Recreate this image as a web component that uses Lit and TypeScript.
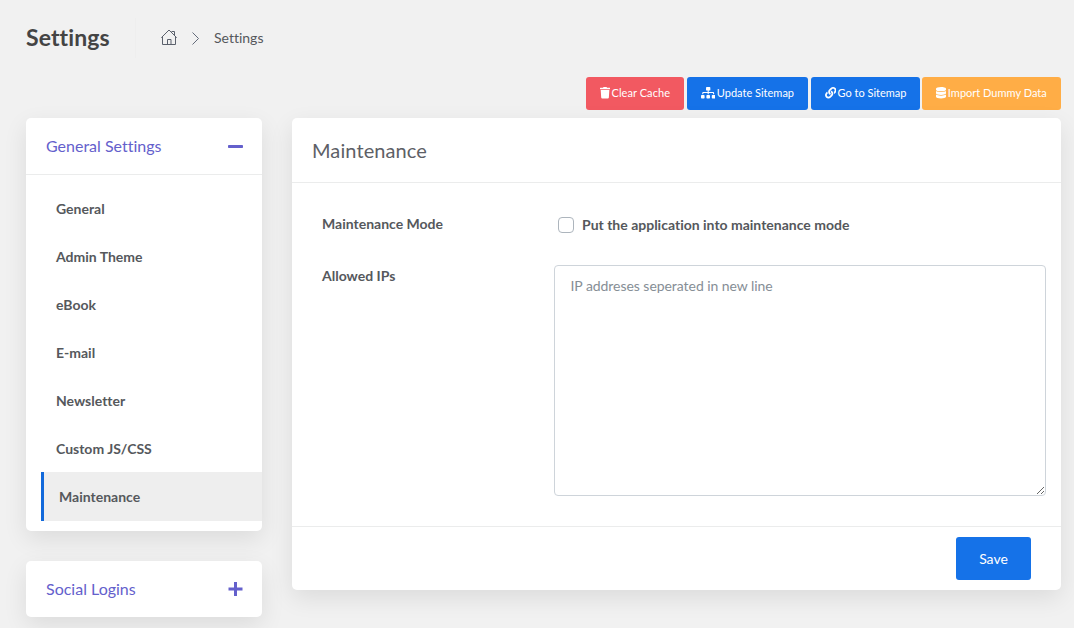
import { LitElement, html, css, svg } from "lit";
import { customElement, state } from "lit/decorators.js";

const ICONS = {
  trash: { w: 448, d: "M432 32H312l-9.4-18.7A24 24 0 0 0 281.1 0H166.8a23.72 23.72 0 0 0-21.4 13.3L136 32H16A16 16 0 0 0 0 48v32a16 16 0 0 0 16 16h416a16 16 0 0 0 16-16V48a16 16 0 0 0-16-16zM53.2 467a48 48 0 0 0 47.9 45h245.8a48 48 0 0 0 47.9-45L416 128H32z" },
  sitemap: { w: 640, d: "M128 352H32c-17.67 0-32 14.33-32 32v96c0 17.67 14.33 32 32 32h96c17.67 0 32-14.33 32-32v-96c0-17.67-14.33-32-32-32zm-24-80h192v48h48v-48h192v48h48v-57.59c0-21.17-17.23-38.41-38.41-38.41H344v-64h40c17.67 0 32-14.33 32-32V32c0-17.67-14.33-32-32-32H256c-17.67 0-32 14.33-32 32v96c0 17.67 14.33 32 32 32h40v64H94.41C73.23 224 56 241.23 56 262.41V320h48v-48zm264 80h-96c-17.67 0-32 14.33-32 32v96c0 17.67 14.33 32 32 32h96c17.67 0 32-14.33 32-32v-96c0-17.67-14.33-32-32-32zm240 0h-96c-17.67 0-32 14.33-32 32v96c0 17.67 14.33 32 32 32h96c17.67 0 32-14.33 32-32v-96c0-17.67-14.33-32-32-32z" },
  link: { w: 512, d: "M326.612 185.391c59.747 59.809 58.927 155.698.36 214.59-.11.12-.24.25-.36.37l-67.2 67.2c-59.27 59.27-155.699 59.262-214.96 0-59.27-59.26-59.27-155.7 0-214.96l37.106-37.106c9.84-9.84 26.786-3.3 27.294 10.606.648 17.722 3.826 35.527 9.69 52.721 1.986 5.822.567 12.262-3.783 16.612l-13.087 13.087c-28.026 28.026-28.905 73.66-1.155 101.96 28.024 28.579 74.086 28.749 102.325.51l67.2-67.19c28.191-28.191 28.073-73.757 0-101.83-3.701-3.694-7.429-6.564-10.341-8.569a16.037 16.037 0 0 1-6.947-12.606c-.396-10.567 3.348-21.456 11.698-29.806l21.054-21.055c5.521-5.521 14.182-6.199 20.584-1.731a152.482 152.482 0 0 1 20.522 17.197zM467.547 44.449c-59.261-59.262-155.69-59.27-214.96 0l-67.2 67.2c-.12.12-.25.25-.36.37-58.566 58.892-59.387 154.781.36 214.59a152.454 152.454 0 0 0 20.521 17.196c6.402 4.468 15.064 3.789 20.584-1.731l21.054-21.055c8.35-8.35 12.094-19.239 11.698-29.806a16.037 16.037 0 0 0-6.947-12.606c-2.912-2.005-6.64-4.875-10.341-8.569-28.073-28.073-28.191-73.639 0-101.83l67.2-67.19c28.239-28.239 74.3-28.069 102.325.51 27.75 28.3 26.872 73.934-1.155 101.96l-13.087 13.087c-4.35 4.35-5.769 10.79-3.783 16.612 5.864 17.194 9.042 34.999 9.69 52.721.509 13.906 17.454 20.446 27.294 10.606l37.106-37.106c59.271-59.259 59.271-155.699.001-214.959z" },
  database: { w: 448, d: "M448 73.143v45.714C448 159.143 347.667 192 224 192S0 159.143 0 118.857V73.143C0 32.857 100.333 0 224 0s224 32.857 224 73.143zM448 176v102.857C448 319.143 347.667 352 224 352S0 319.143 0 278.857V176c48.125 33.143 136.208 48.572 224 48.572S399.874 209.143 448 176zm0 160v102.857C448 479.143 347.667 512 224 512S0 479.143 0 438.857V336c48.125 33.143 136.208 48.572 224 48.572S399.874 369.143 448 336z" },
};

const glyph = (name: keyof typeof ICONS) => {
  const { w, d } = ICONS[name];
  return html`<svg width=${(w / 512) * 11.5} height="11.5" viewBox="0 0 ${w} 512" fill="currentColor" aria-hidden="true">${svg`<path d=${d}></path>`}</svg>`;
};

@customElement("app-root")
export class AppRoot extends LitElement {
  @state() private active = "Maintenance";

  private sections = ["General", "Admin Theme", "eBook", "E-mail", "Newsletter", "Custom JS/CSS", "Maintenance"];

  static styles = css`
    :host {
      display: block;
      box-sizing: border-box;
      height: 628px;
      overflow: hidden;
      padding: 0 13px 0 26px;
      background: #f1f1f1;
      color: #575962;
      color: #55585c;
      font: 400 14px/21px Lato, sans-serif;
      font-variant-ligatures: none;
    }
    * { box-sizing: border-box; }
    svg { display: block; flex: none; }
    .head { display: flex; align-items: center; height: 77px; padding-bottom: 2px; }
    h1 { margin: 0; width: 109px; padding-bottom: 1px; font-size: 23px; font-weight: 700; line-height: 30px; color: #444; white-space: nowrap; letter-spacing: 0.1px; }
    .crumbs { display: flex; align-items: center; height: 40px; padding-left: 25px; border-left: 1px solid #eee; }
    .chev { margin: 1px 14px 0 14px; }
    .actions { display: flex; justify-content: flex-end; height: 33px; }
    .btn {
      display: flex; align-items: center; justify-content: center;
      border: 0; border-radius: 3px; padding: 0 0 1px; color: #fff; background: #1572e8;
      font: 400 11px/18px Lato, sans-serif; font-variant-ligatures: none; gap: 1.5px; white-space: nowrap;
    }
    .clear { width: 98px; background: #f25961; margin-right: 3px; letter-spacing: 0.06px; }
    .update { width: 121px; margin-right: 3px; }
    .goto { width: 109px; margin-right: 2px; }
    .import { width: 139px; background: #ffad46; }
    .main { display: grid; grid-template-columns: 236px 769px; column-gap: 30px; margin-top: 8px; align-items: start; }
    .side { display: flex; flex-direction: column; gap: 30px; }
    .card { background: #fff; border-radius: 5px; box-shadow: 0 8px 24px rgba(0, 0, 0, 0.09); }
    .toggle { display: flex; align-items: center; justify-content: space-between; height: 56px; padding: 0 19px 0 20px; font-size: 16px; color: #6460cc; }
    .toggle span { padding-bottom: 2px; }
    .list { margin: 0; padding: 9px 0 10px 15px; border-top: 1px solid #ebecec; list-style: none; }
    .item { height: 48px; padding-left: 15px; line-height: 50px; font-weight: 700; cursor: pointer; }
    .item.active { height: 49px; background: #eee; border-left: 3px solid #1269db; }
    .title { height: 65px; padding: 0 20px; border-bottom: 1px solid #ebecec; font-size: 20px; line-height: 65px; font-weight: 400; margin: 0; letter-spacing: 0.1px; color: #5d6066; }
    .form { height: 343px; padding: 30px 15px 0 30px; }
    .row { display: grid; grid-template-columns: 232px 492px; }
    .mode { height: 52px; }
    .label { font-weight: 700; line-height: 22px; }
    .check { display: flex; align-items: center; gap: 8px; height: 24px; padding-left: 4px; font-weight: 700; }
    .check span { padding-bottom: 1px; }
    .box { appearance: none; width: 16px; height: 16px; margin: 0; border: 1px solid #adb5bd; border-radius: 4px; background: #fff; }
    .ips {
      display: block; width: 492px; height: 231px; margin: 0; padding: 9px 15.5px; resize: both;
      border: 1px solid #ced4da; border-radius: 4px; font: 400 14px/21px Lato, sans-serif; color: #495057; outline: 0;
      letter-spacing: -0.05px;
    }
    .ips::placeholder { color: #868e96; opacity: 1; }
    .foot { display: flex; justify-content: flex-end; height: 64px; padding: 10px 30px 0 0; border-top: 1px solid #ebecec; }
    .save { width: 75px; height: 43px; font-size: 14px; padding: 0; }
  `;

  render() {
    return html`
      <header class="head">
        <h1>Settings</h1>
        <nav class="crumbs">
          <svg width="16" height="17" viewBox="0 0 16 17" fill="none" stroke="#5b616c" stroke-width="1">
            <path d="M.3 8.700 8 1l7.700 7.700M1.500 7.500v8h13v-8M6.500 15.500v-5h3.500v5M10.500 2.500h3V6.500"></path>
          </svg>
          <svg class="chev" width="9" height="13" viewBox="0 0 9 13" fill="none" stroke="#636b7a" stroke-width="1">
            <path d="M1.500.5 7.500 6.500l-6 6"></path>
          </svg>
          <span>Settings</span>
        </nav>
      </header>
      <div class="actions">
        <button class="btn clear">${glyph("trash")}<span>Clear Cache</span></button>
        <button class="btn update">${glyph("sitemap")}<span>Update Sitemap</span></button>
        <button class="btn goto">${glyph("link")}<span>Go to Sitemap</span></button>
        <button class="btn import">${glyph("database")}<span>Import Dummy Data</span></button>
      </div>
      <div class="main">
        <aside class="side">
          <section class="card">
            <div class="toggle">
              <span>General Settings</span>
              <svg width="15" height="15" viewBox="0 0 15 15" fill="currentColor"><rect x="0" y="6" width="15" height="3" rx=".8"></rect></svg>
            </div>
            <ul class="list">
              ${this.sections.map(
                (s) => html`<li class="item ${s === this.active ? "active" : ""}" @click=${() => (this.active = s)}>${s}</li>`
              )}
            </ul>
          </section>
          <section class="card">
            <div class="toggle">
              <span>Social Logins</span>
              <svg width="15" height="15" viewBox="0 0 15 15" fill="currentColor"><path d="M6 0h3V5.500h5.500v3H9V14H6V8.500H.5v-3H6z"></path></svg>
            </div>
          </section>
        </aside>
        <section class="card">
          <h2 class="title">Maintenance</h2>
          <div class="form">
            <div class="row mode">
              <span class="label">Maintenance Mode</span>
              <label class="check"><input class="box" type="checkbox" /><span>Put the application into maintenance mode</span></label>
            </div>
            <div class="row">
              <span class="label">Allowed IPs</span>
              <textarea class="ips" placeholder="IP addreses seperated in new line"></textarea>
            </div>
          </div>
          <div class="foot"><button class="btn save">Save</button></div>
        </section>
      </div>
    `;
  }
}
